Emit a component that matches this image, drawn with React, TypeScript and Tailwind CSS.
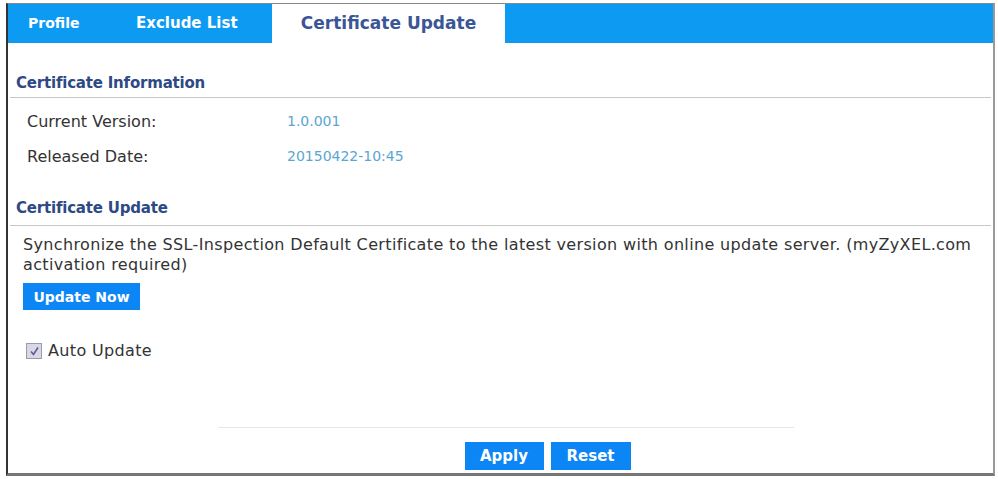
import React from 'react';

const font = { fontFamily: '"DejaVu Sans", "Liberation Sans", sans-serif' };

function Section({ title, gap }: { title: string; gap: string }) {
  return (
    <div className={`border-b border-[#c8c8c8] pl-[6px] ${gap}`}>
      <h3 className="text-[15px] font-bold text-[#2d4a86] tracking-[-0.2px]">{title}</h3>
    </div>
  );
}

export default function App() {
  return (
    <div className="w-[998px] h-[479px] bg-white pt-[3px] pl-[6px] pr-[3px] pb-[3px]" style={font}>
      <div className="h-[473px] border-l-2 border-t border-r-2 border-b-[3px] border-l-[#333] border-t-[#888] border-r-[#999] border-b-[#777] flex flex-col">
        {/* tabs */}
        <div className="h-[39px] bg-[#0d9af2] flex items-stretch">
          <div className="w-[100px] flex items-center pl-[20px] text-white font-bold text-[14px]">Profile</div>
          <div className="w-[164px] flex items-center pl-[28px] text-white font-bold text-[15px]">Exclude List</div>
          <div className="w-[233px] bg-white flex items-center justify-center text-[#3a5696] font-bold text-[17px]">Certificate Update</div>
        </div>

        <div className="pt-[29px] px-[2px]">
          <Section title="Certificate Information" gap="pb-[2px]" />
          <div className="pl-[17px] pt-[12px] text-[16px] text-[#333]">
            <div className="flex h-[35px] items-start">
              <span className="w-[260px]">Current Version:</span>
              <span className="text-[14px] text-[#5aa6d2] pt-[1px]">1.0.001</span>
            </div>
            <div className="flex h-[35px] items-start">
              <span className="w-[260px]">Released Date:</span>
              <span className="text-[14px] text-[#5aa6d2] pt-[1px]">20150422-10:45</span>
            </div>
          </div>

          <div className="pt-[17px]">
            <Section title="Certificate Update" gap="pb-[6px]" />
          </div>
          <div className="pl-[13px] pr-[10px] pt-[9px] text-[16px] text-[#333] leading-[20px] tracking-[0.35px]">
            <p>Synchronize the SSL-Inspection Default Certificate to the latest version with online update server. (myZyXEL.com activation required)</p>
            <button className="mt-[8px] h-[27px] w-[117px] bg-[#0d86f5] text-white font-bold text-[14px] tracking-normal">Update Now</button>
            <label className="flex items-center gap-[6px] mt-[31px] pl-[3px]">
              <span className="w-[16px] h-[16px] border border-[#9a9aa8] bg-[#d8d8e4] flex items-center justify-center">
                <svg width="11" height="11" viewBox="0 0 11 11"><path d="M2 5.5 L4.5 8.5 L9 1.5" stroke="#5a5aa0" strokeWidth="1.6" fill="none" /></svg>
              </span>
              <span>Auto Update</span>
            </label>
          </div>
        </div>

        <div className="mt-auto flex flex-col items-center pb-[3px]">
          <div className="w-[576px] border-t border-[#e6e6e6] ml-[10px]" />
          <div className="flex gap-[7px] mt-[14px] ml-[94px]">
            <button className="w-[79px] h-[28px] bg-[#0d86f5] text-white font-bold text-[15px]">Apply</button>
            <button className="w-[80px] h-[28px] bg-[#0d86f5] text-white font-bold text-[15px]">Reset</button>
          </div>
        </div>
      </div>
    </div>
  );
}
